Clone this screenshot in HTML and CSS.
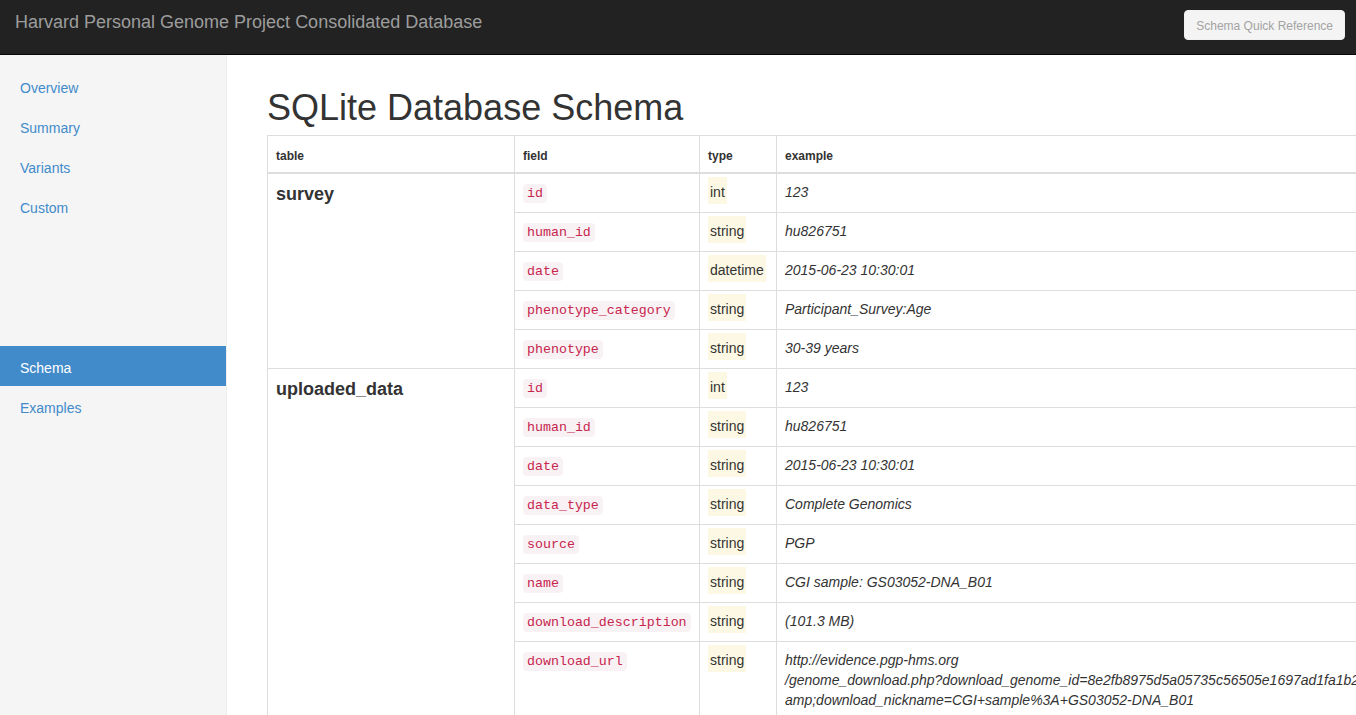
FILE: index.html
```html
<!DOCTYPE html>
<html lang="en">
<head>
<meta charset="utf-8">
<title>Harvard Personal Genome Project Consolidated Database</title>
<link rel="stylesheet" href="styles.css">
</head>
<body>
<header class="navbar">
  <a class="brand" href="#">Harvard Personal Genome Project Consolidated Database</a>
  <button class="btn-ref" type="button">Schema Quick Reference</button>
</header>
<div class="layout">
  <nav class="sidebar">
    <ul class="nav">
      <li><a href="#">Overview</a></li>
      <li><a href="#">Summary</a></li>
      <li><a href="#">Variants</a></li>
      <li><a href="#">Custom</a></li>
    </ul>
    <ul class="nav nav-lower">
      <li class="active"><a href="#">Schema</a></li>
      <li><a href="#">Examples</a></li>
    </ul>
  </nav>
  <main class="main">
    <h1 class="title">SQLite Database Schema</h1>
    <table class="schema">
      <colgroup>
        <col class="c-table">
        <col class="c-field">
        <col class="c-type">
        <col class="c-example">
      </colgroup>
      <thead>
        <tr><th>table</th><th>field</th><th>type</th><th>example</th></tr>
      </thead>
      <tbody>
        <tr><td class="tname" rowspan="5">survey</td><td><code>id</code></td><td><span class="type">int</span></td><td class="ex">123</td></tr>
        <tr><td><code>human_id</code></td><td><span class="type">string</span></td><td class="ex">hu826751</td></tr>
        <tr><td><code>date</code></td><td><span class="type">datetime</span></td><td class="ex">2015-06-23 10:30:01</td></tr>
        <tr><td><code>phenotype_category</code></td><td><span class="type">string</span></td><td class="ex">Participant_Survey:Age</td></tr>
        <tr><td><code>phenotype</code></td><td><span class="type">string</span></td><td class="ex">30-39 years</td></tr>
        <tr><td class="tname" rowspan="8">uploaded_data</td><td><code>id</code></td><td><span class="type">int</span></td><td class="ex">123</td></tr>
        <tr><td><code>human_id</code></td><td><span class="type">string</span></td><td class="ex">hu826751</td></tr>
        <tr><td><code>date</code></td><td><span class="type">string</span></td><td class="ex">2015-06-23 10:30:01</td></tr>
        <tr><td><code>data_type</code></td><td><span class="type">string</span></td><td class="ex">Complete Genomics</td></tr>
        <tr><td><code>source</code></td><td><span class="type">string</span></td><td class="ex">PGP</td></tr>
        <tr><td><code>name</code></td><td><span class="type">string</span></td><td class="ex">CGI sample: GS03052-DNA_B01</td></tr>
        <tr><td><code>download_description</code></td><td><span class="type">string</span></td><td class="ex">(101.3 MB)</td></tr>
        <tr><td><code>download_url</code></td><td><span class="type">string</span></td><td class="ex url"><span class="ln">http://evidence.pgp-hms.org</span><span class="ln">/genome_download.php?download_genome_id=8e2fb8975d5a05735c56505e1697ad1fa1b2c4d9&amp;</span><span class="ln">amp;download_nickname=CGI+sample%3A+GS03052-DNA_B01</span></td></tr>
      </tbody>
    </table>
  </main>
</div>
</body>
</html>
```
FILE: styles.css
```css
* { box-sizing: border-box; }

html, body {
  margin: 0;
  height: 100%;
  overflow: hidden;
}

body {
  font-family: "Liberation Sans", Arial, Helvetica, sans-serif;
  font-size: 14px;
  line-height: 20px;
  color: #333;
  background: #fff;
  display: flex;
  flex-direction: column;
}

a { text-decoration: none; }

.navbar {
  flex: 0 0 55px;
  height: 55px;
  background: #222;
  border-bottom: 1px solid #080808;
  display: flex;
  align-items: flex-start;
  justify-content: space-between;
  padding: 0 11px 0 15px;
}

.brand {
  color: #9d9d9d;
  font-size: 18px;
  line-height: 20px;
  padding-top: 12px;
}

.btn-ref {
  margin-top: 10px;
  height: 30px;
  padding: 1px 11px 0;
  font-family: "Liberation Sans", Arial, Helvetica, sans-serif;
  font-size: 12px;
  line-height: 18px;
  color: #a3a3a3;
  background: #f4f4f4;
  border: 1px solid #f0f0f0;
  border-radius: 4px;
}

.layout {
  flex: 1 1 auto;
  display: flex;
  min-height: 0;
}

.sidebar {
  flex: 0 0 227px;
  background: #f5f5f5;
  border-right: 1px solid #eee;
  padding-top: 11px;
}

.nav {
  list-style: none;
  margin: 0;
  padding: 0;
}

.nav li a {
  display: block;
  padding: 12px 20px 8px;
  line-height: 20px;
  color: #428bca;
}

.nav li.active a {
  background: #428bca;
  color: #fff;
}

.nav-lower { margin-top: 120px; }

.main {
  flex: 1 1 auto;
  min-width: 0;
  overflow: hidden;
  padding: 33px 0 0 40px;
}

.title {
  margin: 0 0 7px;
  font-size: 36px;
  font-weight: 500;
  line-height: 1.1;
  color: #333;
}

.schema {
  border-collapse: collapse;
  border-spacing: 0;
  table-layout: fixed;
  width: 1700px;
  border: 1px solid #ddd;
}

.c-table { width: 247px; }
.c-field { width: 185px; }
.c-type { width: 77px; }

.schema th,
.schema td {
  border: 1px solid #ddd;
  padding: 8px;
  text-align: left;
  vertical-align: top;
  line-height: 20px;
}

.schema th {
  font-size: 12px;
  font-weight: bold;
  padding: 10px 8px 6px;
  border-bottom-width: 2px;
}

.schema td.tname {
  font-size: 18px;
  font-weight: bold;
  line-height: 22px;
  padding-top: 9px;
}

code {
  font-family: "Liberation Mono", "Courier New", monospace;
  font-size: 13.3px;
  padding: 2px 4px;
  color: #c7254e;
  background: #f9f2f4;
  border-radius: 4px;
}

.type {
  display: inline-block;
  vertical-align: top;
  background: #fcf8e3;
  padding: 5px 2px 2px;
  margin: -5px 0 0;
  line-height: 20px;
}

.ex { font-style: italic; }

.url .ln {
  display: block;
  white-space: nowrap;
}
```
